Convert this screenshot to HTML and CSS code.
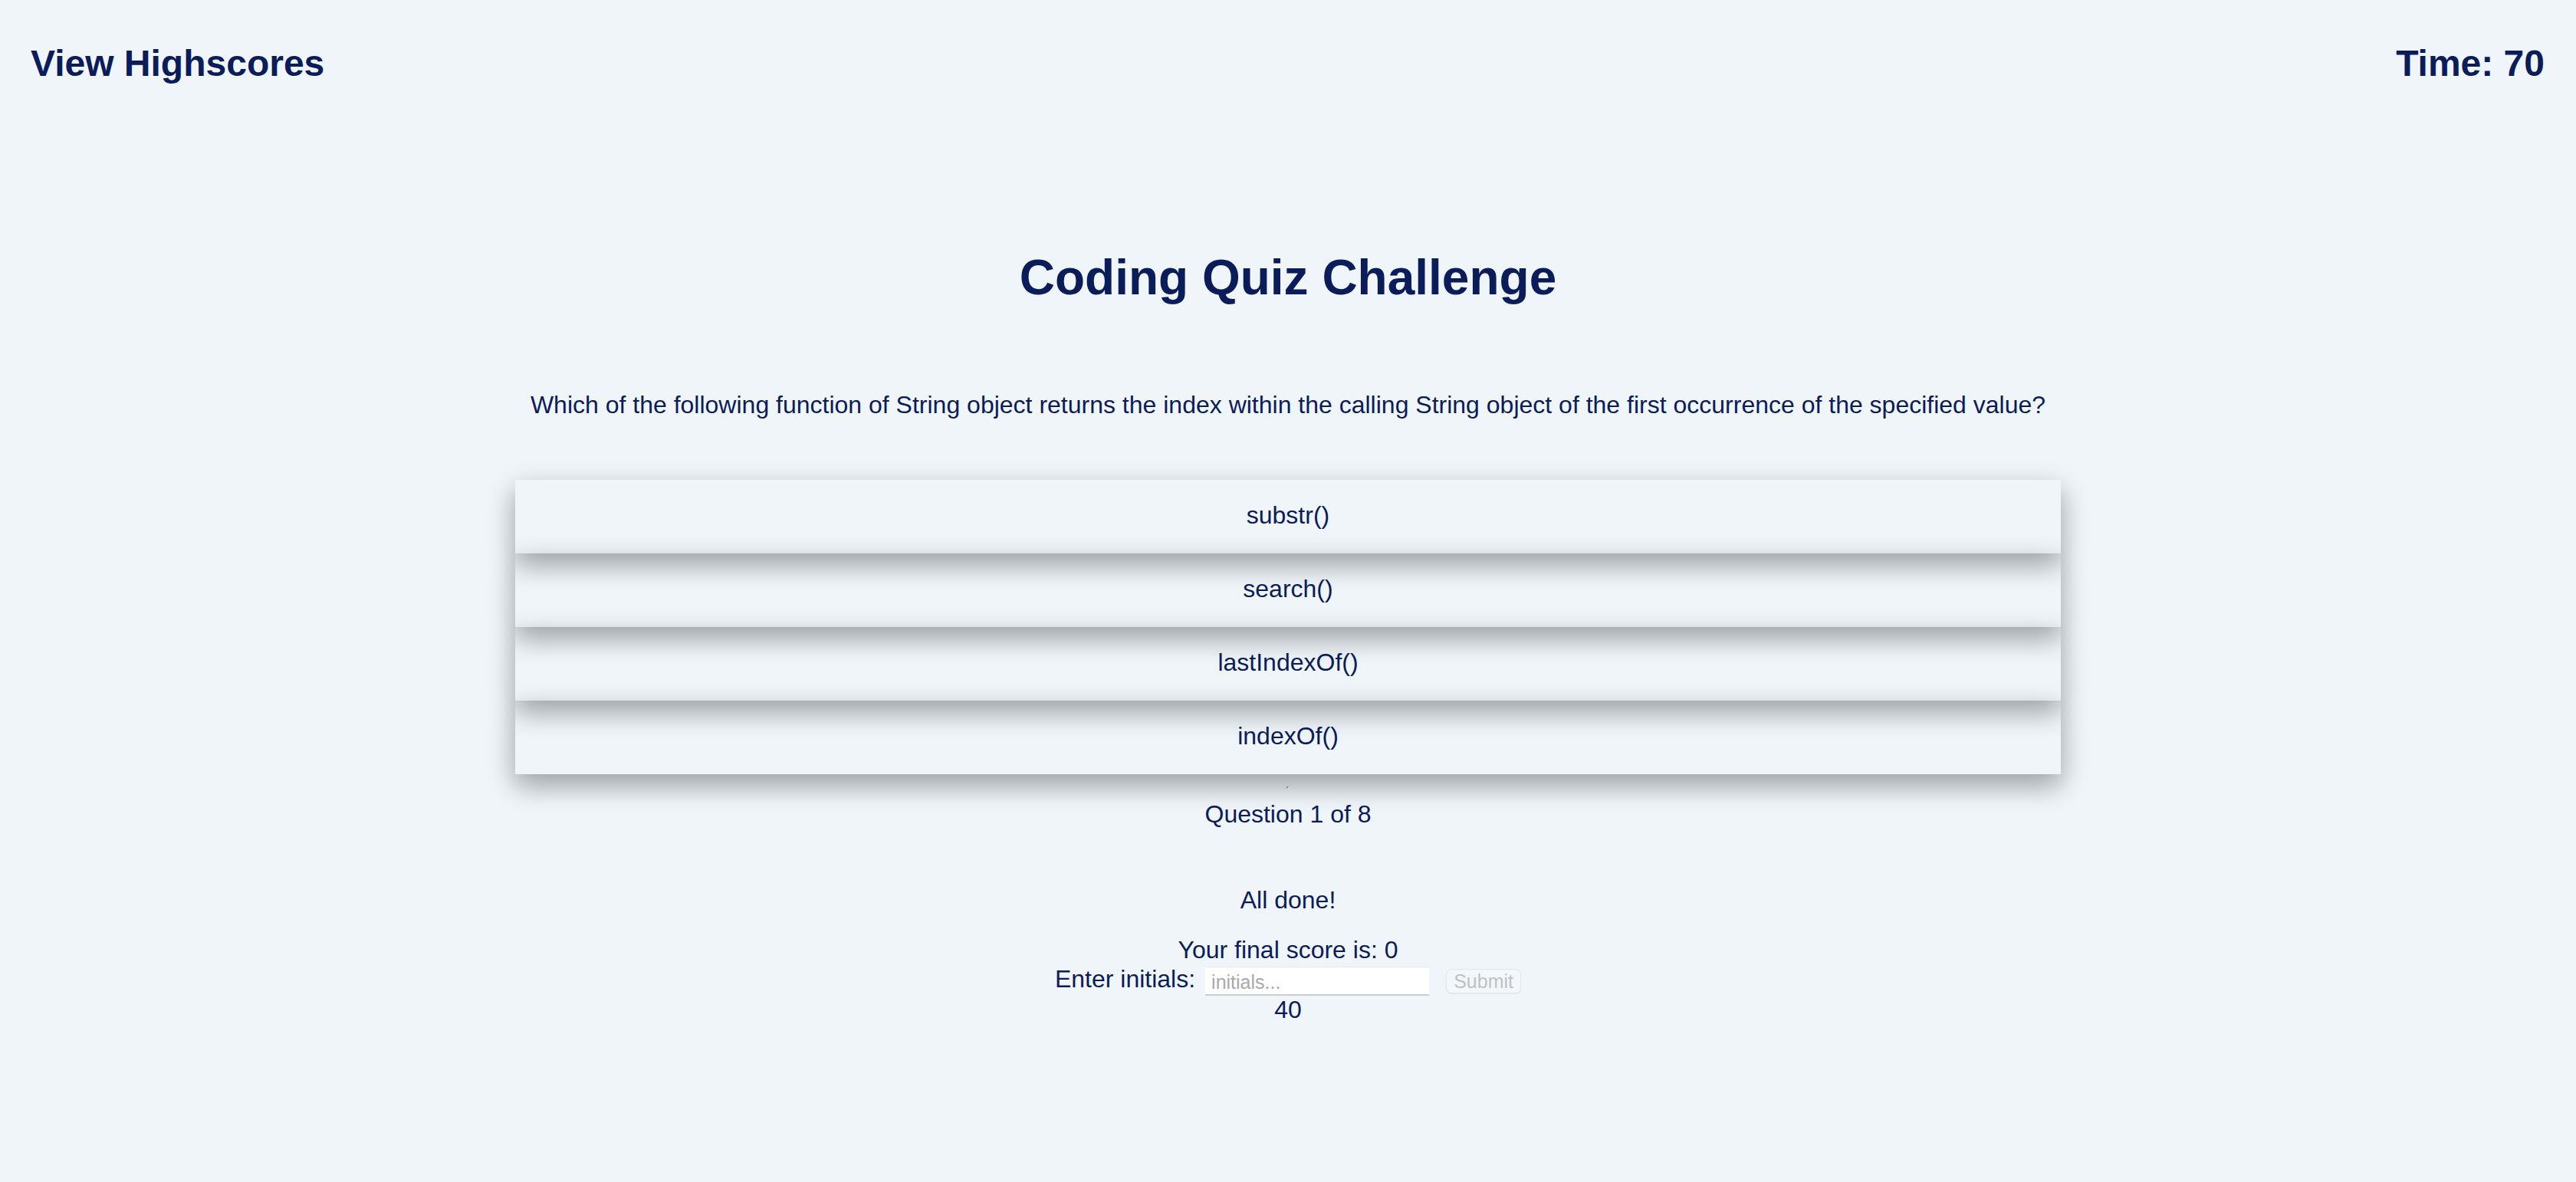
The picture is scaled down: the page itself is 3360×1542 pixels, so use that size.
FILE: index.html
```html
<!DOCTYPE html>
<html lang="en">
<head>
<meta charset="utf-8">
<title>Coding Quiz Challenge</title>
<link rel="stylesheet" href="styles.css">
</head>
<body>
<header class="topbar">
  <a class="highscores" href="#">View Highscores</a>
  <div class="timer">Time: 70</div>
</header>
<main class="quiz">
  <h1 class="title">Coding Quiz Challenge</h1>
  <p class="question">Which of the following function of String object returns the index within the calling String object of the first occurrence of the specified value?</p>
  <div class="choices">
    <button class="choice">substr()</button>
    <button class="choice">search()</button>
    <button class="choice">lastIndexOf()</button>
    <button class="choice">indexOf()</button>
  </div>
  <div class="feedback"><span class="mark"></span></div>
  <p class="progress">Question 1 of 8</p>
  <section class="done">
    <p class="done-title">All done!</p>
    <p class="score">Your final score is: 0</p>
    <form class="initials-row">
      <label class="initials-label" for="initials">Enter initials:</label>
      <input class="initials-input" id="initials" type="text" placeholder="initials...">
      <button class="submit" type="button">Submit</button>
    </form>
    <p class="final">40</p>
  </section>
</main>
</body>
</html>
```
FILE: styles.css
```css
* { box-sizing: border-box; }
html, body {
  margin: 0;
  padding: 0;
  background: #f0f5fa;
}
body {
  font-family: "Liberation Sans", Arial, Helvetica, sans-serif;
  color: #0b1c5b;
}
.topbar {
  display: flex;
  justify-content: space-between;
  align-items: flex-start;
  padding: 55px 41px 0 40px;
}
.highscores, .timer {
  font-size: 48px;
  font-weight: 700;
  line-height: 56px;
  color: #0b1c5b;
  text-decoration: none;
}
.quiz {
  display: flex;
  flex-direction: column;
  align-items: center;
}
.title {
  margin: 214px 0 0;
  font-size: 64px;
  line-height: 74px;
  font-weight: 700;
}
.question {
  margin: 111px 0 0;
  font-size: 32px;
  line-height: 37px;
}
.choices {
  margin-top: 79px;
  width: 60%;
  display: flex;
  flex-direction: column;
}
.choice {
  height: 96px;
  border: none;
  margin: 0;
  padding: 0 0 3px;
  background: transparent;
  font-family: inherit;
  font-size: 32px;
  line-height: 37px;
  color: #0b1c5b;
  box-shadow: 0 16px 32px 0 rgba(0, 0, 0, 0.2), 0 12px 40px 0 rgba(0, 0, 0, 0.19);
  cursor: pointer;
}
.feedback {
  height: 34px;
  display: flex;
  justify-content: center;
  padding-top: 16px;
}
.mark {
  width: 4px;
  height: 4px;
  background: linear-gradient(135deg, #8e8e8e 50%, #d8d8d8 50%);
}
.progress {
  margin: 0;
  font-size: 32px;
  line-height: 37px;
}
.done {
  display: flex;
  flex-direction: column;
  align-items: center;
  margin-top: 75px;
}
.done-title, .score, .final {
  margin: 0;
  font-size: 32px;
  line-height: 37px;
}
.score { margin-top: 28px; }
.initials-row {
  display: flex;
  align-items: flex-end;
  height: 41px;
  margin: 0;
}
.initials-label {
  font-size: 32px;
  line-height: 37px;
  margin: 0 13px 3px 0;
}
.initials-input {
  width: 292px;
  height: 38px;
  margin: 0;
  padding: 4px 8px 0;
  border: none;
  border-bottom: 2px solid #c9ccd1;
  border-top: 1px solid #e6e8ec;
  background: #ffffff;
  font-family: "Liberation Sans", Arial, sans-serif;
  font-size: 25px;
  color: #333;
  outline: none;
}
.initials-input::placeholder { color: #a9a9a9; }
.submit {
  margin: 0 0 3px 22px;
  width: 98px;
  height: 32px;
  padding: 0;
  border: 1px solid #e2e6eb;
  border-radius: 7px;
  background: #f4f7fa;
  box-shadow: 0 1px 1px rgba(0, 0, 0, 0.05);
  font-family: "Liberation Sans", Arial, sans-serif;
  font-size: 25px;
  line-height: 30px;
  color: #bfc1c4;
}
.final { margin-top: 0; }
```
